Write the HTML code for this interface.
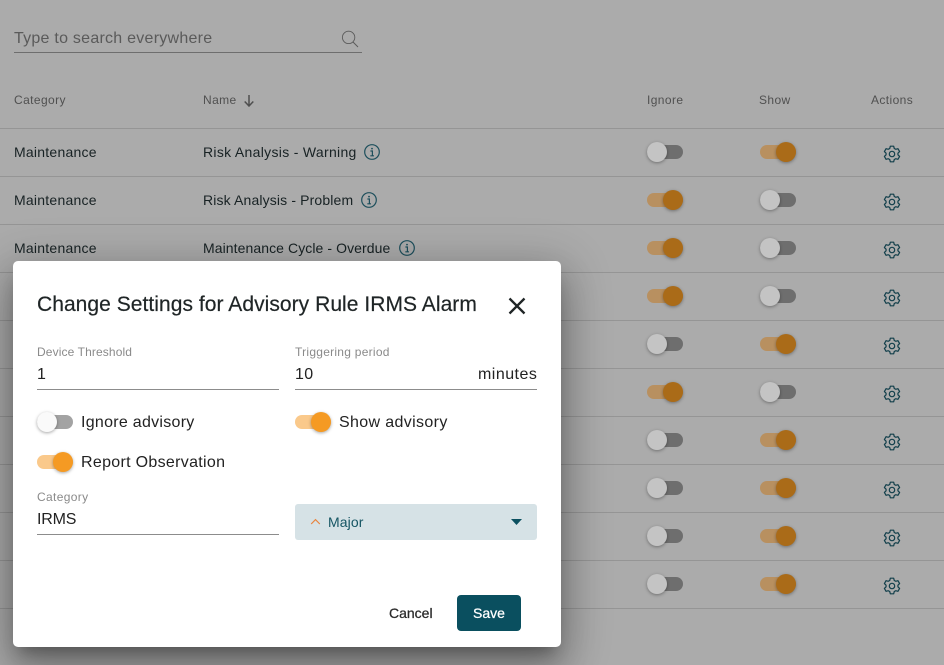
<!DOCTYPE html>
<html><head><meta charset="utf-8">
<style>
html,body{margin:0;padding:0}
body{width:944px;height:665px;overflow:hidden;position:relative;background:#ababab;font-family:"Liberation Sans",sans-serif;color:#1b2426}
.t{position:absolute;white-space:nowrap;line-height:20px}
.h{font-size:12px;color:#505050;letter-spacing:.4px}
.c{font-size:14px;letter-spacing:.24px;color:#182224}
.l{position:absolute;left:0;width:944px;height:1px;background:#959595}
.r{position:absolute;left:0;width:944px;height:48px}
.tg{position:absolute;width:36px;height:14px;border-radius:7px}
.tg i{position:absolute;top:-3px;width:20px;height:20px;border-radius:50%;box-shadow:0 1px 3px rgba(0,0,0,.35)}
.r .off{background:#6e6e6e}.r .off i{left:0;background:#c4c4c4}
.r .on{background:#b89060}.r .on i{left:16px;background:#aa6b18}
.m .off{background:#a3a3a3}.m .off i{left:0;background:#fafafa}
.m .on{background:#fac98b}.m .on i{left:16px;background:#f59a23}
.gear{position:absolute;left:883px;top:17px;width:18px;height:18px}
.info{position:absolute;width:18px;height:18px}
.m{position:absolute;left:13px;top:261px;width:548px;height:386px;background:#fff;border-radius:5px;box-shadow:0 11px 15px -7px rgba(0,0,0,.3),0 24px 38px 3px rgba(0,0,0,.2),0 9px 46px 8px rgba(0,0,0,.2)}
.lab{font-size:12px;color:#8a8a8a;letter-spacing:.2px}
.v{font-size:16px;letter-spacing:.3px;color:#222}
.ul{position:absolute;height:1px;background:#8c8c8c;width:242px}
</style></head><body>
<svg width="0" height="0" style="position:absolute"><defs>
<symbol id="g" viewBox="-1 -1 18 18"><path d="M5.75 2.44L6.34.18H9.66L10.25 2.44L11.69 3.27L13.94 2.65L15.61 5.53L13.94 7.17V8.83L15.61 10.47L13.94 13.35L11.69 12.73L10.25 13.56L9.66 15.82H6.34L5.75 13.56L4.31 12.73L2.06 13.35L.39 10.47L2.06 8.83V7.17L.39 5.53L2.06 2.65L4.31 3.27Z" fill="none" stroke="#123f4b" stroke-width="1.2" stroke-linejoin="round"/><circle cx="8" cy="8" r="2.7" fill="none" stroke="#123f4b" stroke-width="1.2"/></symbol>
<symbol id="n" viewBox="0 0 18 18"><circle cx="9" cy="9" r="7.3" fill="none" stroke="#1d4f5c" stroke-width="1.2"/><path d="M7.4 8H9.4V12.6M7.3 12.8H11" fill="none" stroke="#1d4f5c" stroke-width="1.2"/><circle cx="9" cy="5.6" r=".9" fill="#1d4f5c"/></symbol>
</defs></svg>

<div class="t" style="left:14px;top:29px;font-size:16px;letter-spacing:.25px;color:#5a5a5a">Type to search everywhere</div>
<svg style="position:absolute;left:340px;top:29px" width="20" height="20" viewBox="0 0 20 20"><circle cx="8.6" cy="8.4" r="6.2" fill="none" stroke="#5a5a5a" stroke-width=".9"/><path d="M13 13L18 18" stroke="#5a5a5a" stroke-width="1" fill="none"/></svg>
<div style="position:absolute;left:14px;top:52px;width:348px;height:1px;background:#6e6e6e"></div>

<div class="t h" style="left:14px;top:90px">Category</div>
<div class="t h" style="left:203px;top:90px">Name</div>
<svg style="position:absolute;left:243px;top:94px" width="12" height="13" viewBox="0 0 12 13"><path d="M6 1V12M1.7 7.5L6 12L10.3 7.5" fill="none" stroke="#4f4f4f" stroke-width="1.5"/></svg>
<div class="t h" style="left:647px;top:90px">Ignore</div>
<div class="t h" style="left:759px;top:90px">Show</div>
<div class="t h" style="left:871px;top:90px">Actions</div>

<div class="l" style="top:128px"></div><div class="l" style="top:176px"></div><div class="l" style="top:224px"></div><div class="l" style="top:272px"></div><div class="l" style="top:320px"></div><div class="l" style="top:368px"></div><div class="l" style="top:416px"></div><div class="l" style="top:464px"></div><div class="l" style="top:512px"></div><div class="l" style="top:560px"></div><div class="l" style="top:608px"></div>

<div class="r" style="top:128px"><div class="t c" style="left:14px;top:14px">Maintenance</div><div class="t c" style="left:203px;top:14px;letter-spacing:.31px">Risk Analysis - Warning</div><svg class="info" style="left:363px;top:15px"><use href="#n"/></svg><div class="tg off" style="left:647px;top:17px"><i></i></div><div class="tg on" style="left:760px;top:17px"><i></i></div><svg class="gear"><use href="#g"/></svg></div>
<div class="r" style="top:176px"><div class="t c" style="left:14px;top:14px">Maintenance</div><div class="t c" style="left:203px;top:14px;letter-spacing:.14px">Risk Analysis - Problem</div><svg class="info" style="left:360px;top:15px"><use href="#n"/></svg><div class="tg on" style="left:647px;top:17px"><i></i></div><div class="tg off" style="left:760px;top:17px"><i></i></div><svg class="gear"><use href="#g"/></svg></div>
<div class="r" style="top:224px"><div class="t c" style="left:14px;top:14px">Maintenance</div><div class="t c" style="left:203px;top:14px;letter-spacing:.08px">Maintenance Cycle - Overdue</div><svg class="info" style="left:398px;top:15px"><use href="#n"/></svg><div class="tg on" style="left:647px;top:17px"><i></i></div><div class="tg off" style="left:760px;top:17px"><i></i></div><svg class="gear"><use href="#g"/></svg></div>
<div class="r" style="top:272px"><div class="tg on" style="left:647px;top:17px"><i></i></div><div class="tg off" style="left:760px;top:17px"><i></i></div><svg class="gear"><use href="#g"/></svg></div>
<div class="r" style="top:320px"><div class="tg off" style="left:647px;top:17px"><i></i></div><div class="tg on" style="left:760px;top:17px"><i></i></div><svg class="gear"><use href="#g"/></svg></div>
<div class="r" style="top:368px"><div class="tg on" style="left:647px;top:17px"><i></i></div><div class="tg off" style="left:760px;top:17px"><i></i></div><svg class="gear"><use href="#g"/></svg></div>
<div class="r" style="top:416px"><div class="tg off" style="left:647px;top:17px"><i></i></div><div class="tg on" style="left:760px;top:17px"><i></i></div><svg class="gear"><use href="#g"/></svg></div>
<div class="r" style="top:464px"><div class="tg off" style="left:647px;top:17px"><i></i></div><div class="tg on" style="left:760px;top:17px"><i></i></div><svg class="gear"><use href="#g"/></svg></div>
<div class="r" style="top:512px"><div class="tg off" style="left:647px;top:17px"><i></i></div><div class="tg on" style="left:760px;top:17px"><i></i></div><svg class="gear"><use href="#g"/></svg></div>
<div class="r" style="top:560px"><div class="tg off" style="left:647px;top:17px"><i></i></div><div class="tg on" style="left:760px;top:17px"><i></i></div><svg class="gear"><use href="#g"/></svg></div>

<div class="m">
<div class="t" style="left:24px;top:33px;line-height:22px;font-size:21px;letter-spacing:.05px;color:#1f2526;-webkit-text-stroke:.2px #1f2526">Change Settings for Advisory Rule IRMS Alarm</div>
<svg style="position:absolute;left:495px;top:36px" width="18" height="18" viewBox="0 0 18 18"><path d="M1.5 1.5L16.5 16.5M16.5 1.5L1.5 16.5" stroke="#1f2526" stroke-width="2.3" fill="none"/></svg>

<div class="t lab" style="left:24px;top:81px;letter-spacing:.12px">Device Threshold</div>
<div class="t v" style="left:24px;top:104px">1</div>
<div class="ul" style="left:24px;top:128px"></div>

<div class="t lab" style="left:282px;top:81px;letter-spacing:.26px">Triggering period</div>
<div class="t v" style="left:282px;top:104px">10</div>
<div class="t v" style="left:465px;top:104px;letter-spacing:.47px">minutes</div>
<div class="ul" style="left:282px;top:128px"></div>

<div class="tg off" style="left:24px;top:154px"><i></i></div>
<div class="t v" style="left:68px;top:152px;letter-spacing:.28px">Ignore advisory</div>
<div class="tg on" style="left:282px;top:154px"><i></i></div>
<div class="t v" style="left:326px;top:152px;letter-spacing:.36px">Show advisory</div>
<div class="tg on" style="left:24px;top:194px"><i></i></div>
<div class="t v" style="left:68px;top:192px;letter-spacing:.31px">Report Observation</div>

<div class="t lab" style="left:24px;top:226px;letter-spacing:.35px">Category</div>
<div class="t v" style="left:24px;top:249px;letter-spacing:-.2px">IRMS</div>
<div class="ul" style="left:24px;top:273px"></div>

<div style="position:absolute;left:282px;top:243px;width:242px;height:36px;background:#d6e2e6;border-radius:3px"></div>
<svg style="position:absolute;left:297px;top:257px" width="11" height="7" viewBox="0 0 11 7"><path d="M1.2 6L5.5 1.6L9.8 6" fill="none" stroke="#e8843f" stroke-width="1.2"/></svg>
<div class="t" style="left:315px;top:251px;font-size:14px;letter-spacing:.1px;color:#155563">Major</div>
<svg style="position:absolute;left:498px;top:258px" width="11" height="6" viewBox="0 0 11 6"><path d="M0 0H11L5.5 6Z" fill="#0b5060"/></svg>

<div class="t" style="left:376px;top:342px;font-size:14px;color:#2a2a2a;-webkit-text-stroke:.25px #2a2a2a">Cancel</div>
<div style="position:absolute;left:444px;top:334px;width:64px;height:36px;background:#0a4f5f;border-radius:4px"></div>
<div class="t" style="left:460px;top:342px;font-size:14px;color:#fff;-webkit-text-stroke:.25px #fff">Save</div>
</div>
</body></html>
